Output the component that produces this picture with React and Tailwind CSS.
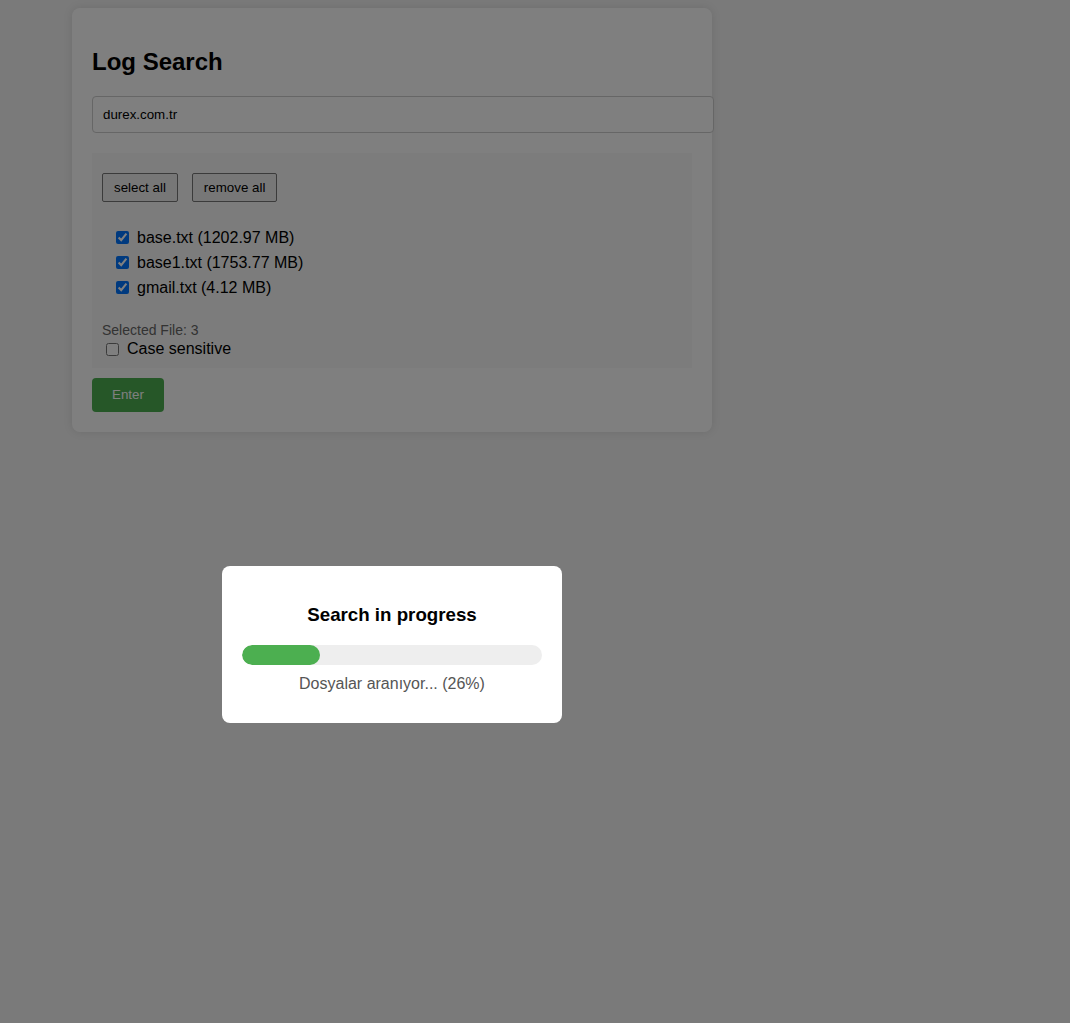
import React from "react";

const files = [
  { name: "base.txt", size: "1202.97 MB" },
  { name: "base1.txt", size: "1753.77 MB" },
  { name: "gmail.txt", size: "4.12 MB" },
];

export default function App() {
  return (
    <div className="relative min-h-[1023px] w-full bg-[#f4f4f4] pl-[72px] pt-[8px] font-['Liberation_Sans',Arial,sans-serif] text-black">
      <div className="w-[640px] rounded-[8px] bg-white p-[20px] shadow-[0_0_10px_rgba(0,0,0,0.1)]">
        <h2 className="my-[20px] text-[24px] font-bold leading-[28px]">Log Search</h2>
        <input
          readOnly
          value="durex.com.tr"
          className="box-content block h-[15px] w-[600px] rounded-[4px] border border-[#ccc] bg-white px-[10px] py-[10px] text-[13.33px] leading-[15px] text-black outline-none"
        />
        <div className="mt-[20px] bg-[#f9f9f9] px-[10px] pb-[10px] pt-[20px]">
          <div className="flex gap-[14px]">
            <button className="h-[29px] rounded-[2px] border border-[#767676] bg-[#efefef] px-[11px] text-[13.33px] leading-[15px] text-black">
              select all
            </button>
            <button className="h-[29px] rounded-[2px] border border-[#767676] bg-[#efefef] px-[11px] text-[13.33px] leading-[15px] text-black">
              remove all
            </button>
          </div>
          <div className="mt-[23px] flex flex-col pl-[10px]">
            {files.map((f) => (
              <label key={f.name} className="flex h-[25px] items-center text-[16px]">
                <input
                  type="checkbox"
                  defaultChecked
                  className="ml-[4px] mr-[8px] h-[13px] w-[13px] accent-[#0075ff]"
                />
                <span>
                  {f.name} ({f.size})
                </span>
              </label>
            ))}
          </div>
          <div className="mt-[22px] text-[14px] leading-[16px] text-[#666]">Selected File: 3</div>
          <label className="mt-[2px] flex h-[18px] items-center text-[16px]">
            <input type="checkbox" className="ml-[4px] mr-[8px] h-[13px] w-[13px] accent-[#0075ff]" />
            <span>Case sensitive</span>
          </label>
        </div>
        <button className="mt-[10px] h-[34px] rounded-[4px] bg-[#4caf50] px-[20px] text-[13.33px] text-white">
          Enter
        </button>
      </div>

      <div className="fixed inset-0 bg-black/50" />

      <div className="absolute left-[222px] top-[566px] w-[340px] rounded-[8px] bg-white p-[20px] text-center">
        <h3 className="mb-[19px] mt-[18px] text-[18.72px] font-bold leading-[22px]">Search in progress</h3>
        <div className="h-[20px] w-[300px] overflow-hidden rounded-[10px] bg-[#eee]">
          <div className="h-full rounded-[10px] bg-[#4caf50]" style={{ width: "26%" }} />
        </div>
        <p className="my-[10px] text-[16px] leading-[18px] text-[#555]">Dosyalar aranıyor... (26%)</p>
      </div>
    </div>
  );
}
